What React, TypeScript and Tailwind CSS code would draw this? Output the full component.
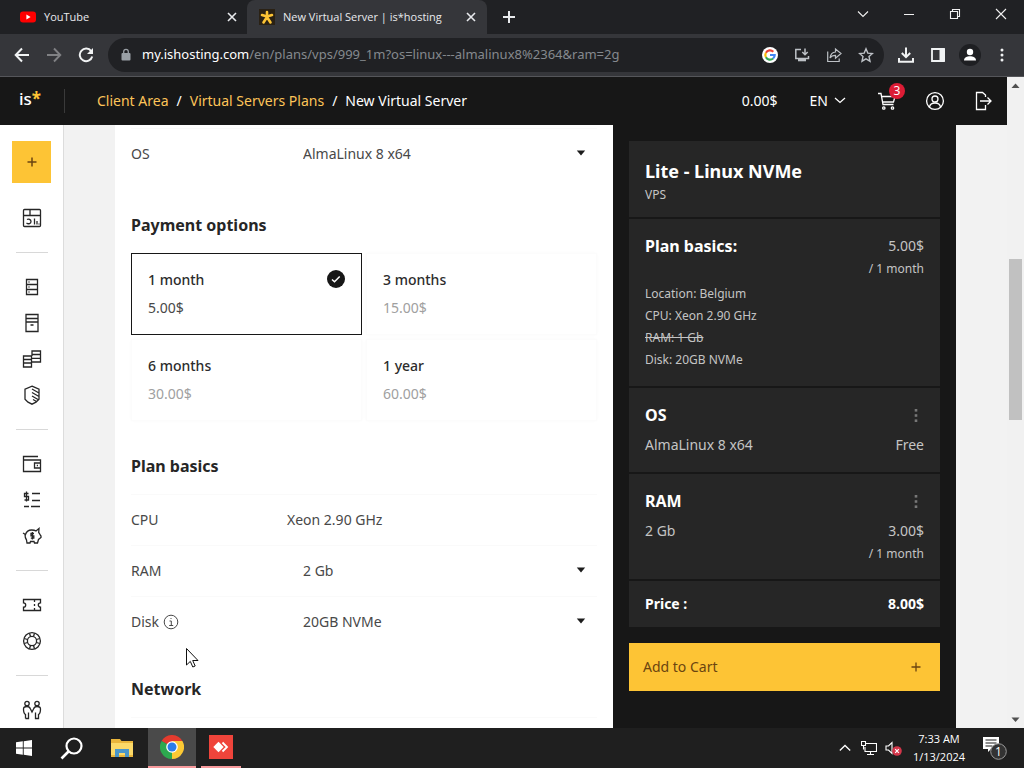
import { useState, type ReactNode } from "react";

type IconProps = { children: ReactNode; className?: string; box?: string };

function Icon({ children, className = "size-5", box = "0 0 20 20" }: IconProps) {
  return (
    <svg viewBox={box} className={className} fill="none" stroke="currentColor" strokeWidth="1.3" aria-hidden="true">
      {children}
    </svg>
  );
}

const CloseIcon = () => (
  <Icon className="size-2.5" box="0 0 10 10">
    <path d="M1 1l8 8M9 1L1 9" strokeWidth="1.6" />
  </Icon>
);

const StarMan = () => (
  <svg viewBox="0 0 16 16" className="size-4" aria-hidden="true">
    <rect width="16" height="16" fill="#2a2114" />
    <g stroke="#fdc435" strokeWidth="2.6" strokeLinecap="round">
      <path d="M8 8.5V3M8 7.500L3 6M8 7.500l5-1.500M8 8l-3.500 5.500M8 8l3.500 5.500" />
    </g>
  </svg>
);

function TabStrip() {
  return (
    <div className="flex h-[34px] shrink-0 bg-[#202124] text-[11px] text-[#e8eaed]">
      <div className="flex w-[247px] items-center pr-1.5 pl-5">
        <svg viewBox="0 0 16 16" className="size-4" aria-hidden="true">
          <rect y="2.500" width="16" height="11" rx="3" fill="#f00" />
          <path d="M6.400 5.600v4.800L10.600 8z" fill="#fff" />
        </svg>
        <span className="ml-2 grow">YouTube</span>
        <button aria-label="Close YouTube" className="p-1"><CloseIcon /></button>
      </div>
      <div className="flex w-[240px] items-center rounded-t-lg bg-[#35363a] pr-[7px] pl-3">
        <StarMan />
        <span className="ml-2 grow whitespace-nowrap">New Virtual Server | is*hosting</span>
        <button aria-label="Close New Virtual Server" className="p-1"><CloseIcon /></button>
      </div>
      <button aria-label="New tab" className="ml-3.5 self-center">
        <Icon className="size-4" box="0 0 16 16"><path d="M8 2v12M2 8h12" strokeWidth="2" /></Icon>
      </button>
      <div className="ml-auto flex h-7 text-[#f1f1f1]">
        <button aria-label="Search tabs" className="flex w-[46px] items-center justify-center">
          <Icon className="size-3" box="0 0 12 12"><path d="M1 3.500l5 5 5-5" strokeWidth="1.100" /></Icon>
        </button>
        <button aria-label="Minimize" className="flex w-[46px] items-center justify-center">
          <Icon className="size-3" box="0 0 12 12"><path d="M1 6.500h10" strokeWidth="1" /></Icon>
        </button>
        <button aria-label="Restore" className="flex w-[46px] items-center justify-center">
          <Icon className="size-3" box="0 0 12 12"><path d="M1.500 3.500h7v7h-7zM3.500 3.500v-2h7v7h-2" strokeWidth="1.100" /></Icon>
        </button>
        <button aria-label="Close window" className="flex w-[46px] items-center justify-center">
          <Icon className="size-3" box="0 0 12 12"><path d="M1 1l10 10M11 1L1 11" strokeWidth="1.100" /></Icon>
        </button>
      </div>
    </div>
  );
}

const toolButton = "flex size-8 items-center justify-center";

function Toolbar() {
  return (
    <div className="flex h-[43px] shrink-0 items-center border-b border-[#55565a] bg-[#35363a] px-1.5 text-[#f1f3f4]">
      <button aria-label="Back" className={toolButton}>
        <Icon className="size-4" box="0 0 16 16"><path d="M15 8H2M8 1.500L1.700 8 8 14.500" strokeWidth="2" /></Icon>
      </button>
      <button aria-label="Forward" className={`${toolButton} text-[#808184]`}>
        <Icon className="size-4" box="0 0 16 16"><path d="M1 8h13M8 1.500L14.300 8 8 14.500" strokeWidth="1.900" /></Icon>
      </button>
      <button aria-label="Reload" className={toolButton}>
        <Icon className="size-4" box="0 0 16 16">
          <path d="M13.200 4.200A6.300 6.300 0 1 0 14.200 9.500" strokeWidth="2" />
          <path d="M15 1v6H9z" fill="currentColor" stroke="none" />
        </Icon>
      </button>
      <div className="mx-1.5 flex h-[34px] grow items-center rounded-full bg-[#202124] pr-0.5 pl-3 text-[#bdc1c6]">
        <svg viewBox="0 0 12 14" className="h-3.5 w-3" fill="#9aa0a6" aria-hidden="true">
          <rect x="1.500" y="5" width="9" height="7.500" rx="1" />
          <path d="M3.700 5.500V3.600a2.300 2.300 0 0 1 4.600 0v1.900" fill="none" stroke="#9aa0a6" strokeWidth="1.300" />
        </svg>
        <div className="ml-2.5 grow font-['Noto_Sans',sans-serif] text-[13px] whitespace-nowrap text-[#85898e]">
          <span className="text-white">my.ishosting.com</span>/en/plans/vps/999_1m?os=linux---almalinux8%2364&amp;ram=2g
        </div>
        <button aria-label="Google" className={toolButton}>
          <svg viewBox="0 0 16 16" className="size-4" aria-hidden="true">
            <circle cx="8" cy="8" r="8" fill="#fff" />
            <g fill="none" strokeWidth="2.200">
              <path d="M11.300 4.700A4.700 4.700 0 0 0 3.900 5.700" stroke="#ea4335" />
              <path d="M3.900 5.700a4.700 4.700 0 0 0 0 4.600" stroke="#fbbc05" />
              <path d="M3.900 10.300a4.700 4.700 0 0 0 7.200 1.200" stroke="#34a853" />
              <path d="M11.100 11.500A4.700 4.700 0 0 0 12.700 8H8" stroke="#4285f4" />
            </g>
          </svg>
        </button>
        <button aria-label="Install app" className={toolButton}>
          <Icon className="size-4" box="0 0 16 16">
            <path d="M7 2.500H1.800v9H14.500V9M11 1.500v6M8.300 5l2.700 2.700L13.700 5" strokeWidth="1.500" />
            <path d="M4 12h8v2.300H4z" fill="currentColor" stroke="none" />
          </Icon>
        </button>
        <button aria-label="Share" className={toolButton}>
          <Icon className="size-4" box="0 0 16 16">
            <path d="M1.700 4.500v10h11.500v-3M9.500 2v3C6 5.300 4.500 7.500 4 11c1.300-2 3-2.600 5.500-2.600v2.800L15 6.500z" strokeWidth="1.200" />
          </Icon>
        </button>
        <button aria-label="Bookmark" className={toolButton}>
          <Icon className="size-4" box="0 0 16 16">
            <path d="M8 1.800l1.800 4.300 4.700.4-3.500 3.100 1 4.600L8 11.800l-4 2.400 1-4.600L1.500 6.500l4.700-.4z" strokeWidth="1.400" />
          </Icon>
        </button>
      </div>
      <button aria-label="Downloads" className={toolButton}>
        <Icon className="size-[18px]" box="0 0 18 18"><path d="M9 1.500v9.500M4.800 7L9 11.200 13.200 7M2 12v3.700h14V12" strokeWidth="2" /></Icon>
      </button>
      <button aria-label="Side panel" className={toolButton}>
        <Icon className="size-4" box="0 0 16 16">
          <path d="M2 2h12v12H2z" strokeWidth="1.800" /><path d="M9.500 2H15v12H9.500z" fill="currentColor" stroke="none" />
        </Icon>
      </button>
      <button aria-label="Profile" className={toolButton}>
        <svg viewBox="0 0 22 22" className="size-[22px]" aria-hidden="true">
          <circle cx="11" cy="11" r="11" fill="#1e1f22" />
          <circle cx="11" cy="8" r="3.200" fill="#fff" />
          <path d="M5 16.500c0-3 3-4.300 6-4.300s6 1.300 6 4.300z" fill="#fff" />
        </svg>
      </button>
      <button aria-label="Menu" className={toolButton}>
        <svg viewBox="0 0 4 16" className="h-4 w-1" fill="currentColor" aria-hidden="true">
          <circle cx="2" cy="3" r="1.500" /><circle cx="2" cy="8" r="1.500" /><circle cx="2" cy="13" r="1.500" />
        </svg>
      </button>
    </div>
  );
}

function SiteHeader() {
  return (
    <header className="flex h-12 shrink-0 items-center bg-[#171717] pr-3 text-[14px] text-white">
      <a href="#home" className="w-16 pb-1 pl-[19px] text-[17px] leading-6 font-medium">
        is<span className="font-bold text-[#fdc435]">*</span>
      </a>
      <div className="h-6 w-px bg-[#3a3a3a]" />
      <nav aria-label="Breadcrumb" className="ml-8 flex gap-2 pb-0.5 whitespace-nowrap">
        <a href="#client" className="text-[#fdc459]">Client Area</a>
        <span>/</span>
        <a href="#plans" className="text-[#fdc459]">Virtual Servers Plans</a>
        <span>/</span>
        <span>New Virtual Server</span>
      </nav>
      <span className="ml-auto pb-0.5">0.00$</span>
      <button className="ml-8 flex items-center gap-1.5 pb-0.5">
        EN
        <Icon className="size-3" box="0 0 12 12"><path d="M1 4l5 4.500L11 4" /></Icon>
      </button>
      <a href="#cart" aria-label="Cart, 3 items" className="relative ml-[29px] flex size-6 items-center justify-center">
        <Icon>
          <path d="M1 2.500h3l2 11h10.500M5 5.500h13l-1.500 5.500H6" />
          <circle cx="6.800" cy="17" r="1.200" /><circle cx="15.500" cy="17" r="1.200" />
        </Icon>
        <span className="absolute -top-1.5 left-3.5 flex size-4 items-center justify-center rounded-full bg-[#dc1c35] text-[12px]">3</span>
      </a>
      <a href="#account" aria-label="Account" className="ml-6 flex size-6 items-center justify-center">
        <Icon>
          <circle cx="10" cy="10" r="8.400" /><circle cx="10" cy="8" r="3" />
          <path d="M4.500 16c.5-3 2.500-4 5.500-4s5 1 5.500 4" />
        </Icon>
      </a>
      <a href="#logout" aria-label="Log out" className="ml-6 flex size-6 items-center justify-center">
        <Icon><path d="M12.500 6V4L9.500 1.500h-6v17h9V14M7 10h11M14.500 6.500L18 10l-3.500 3.500" /></Icon>
      </a>
    </header>
  );
}

const navGroups: { label: string; art: ReactNode }[][] = [
  [
    { label: "Dashboard", art: <><rect x="1.500" y="1.500" width="17" height="17" rx="1" /><path d="M1.500 7.500h17M8 1.500v6M5 11.500c1.500-1 4 0 4 2s-2.500 3-4.500 1.500M12.500 16.500v-6M15 16.500V13M17 16.500v-1" /></> },
  ],
  [
    { label: "Virtual servers", art: <path d="M4.500 2.500h11v15h-11zM4.500 7.500h11M4.500 12.500h11M6.500 5h1M6.500 10h1M6.500 15h1" /> },
    { label: "Dedicated servers", art: <path d="M4 1.500h12v17H4zM4 5.500h12M4 9h12M8.500 12h3" /> },
    { label: "Storage", art: <path d="M1.500 7h8v11h-8zM1.500 10.500h8M1.500 14h8M10 13h8.500V2H10v5M10 5.500h8.500M10 9.300h8.500" /> },
    { label: "Protection", art: <path d="M10 1.200l7 3v10l-3 3-4 2-4-2-3-3v-10zM10 4l7 4M10 7.500l7 4M10 11l6 3.500M11 14.500l3.500 2" /> },
  ],
  [
    { label: "Wallet", art: <path d="M16 2.500H1.500v15h17V6h-17M18.500 9h-6v5h6M14.800 11.500h1.200" /> },
    { label: "Invoices", art: <path d="M6.500 3.500h-4v3h4v3.500h-4M4.500 1.500v10M10 3.500h8M10 10.500h8M2 16.500h5M9 16.500h9" /> },
    { label: "Savings", art: <><path d="M1 7l2.500 1.500C4.500 5.500 6.500 4 9.500 4c2 0 3.500.3 4.500 1l3-2.500-.3 4C18 8 18 9 19 10v1.500l-2.500 2L15.500 17h-3l-.5-1.500H8.500L8 17H5l-.5-3C3.300 12.500 3 10.500 3 8.500" /><path d="M12 7.500H9v2.300h2.800v2.400H8.800M10.400 6v7.500" /></> },
  ],
  [
    { label: "Tickets", art: <path d="M1.500 4.500h17v3.300a2.200 2.200 0 0 0 0 4.400v3.300h-17v-3.300a2.200 2.200 0 0 0 0-4.400zM12.500 5v2M12.500 9v2M12.500 13v2" /> },
    { label: "Support", art: <><circle cx="10" cy="10" r="8.400" /><circle cx="10" cy="10" r="4.600" /><path d="M7.500 2.200L8.500 5.500M12.500 2.200l-1 3.300M7.500 17.800l1-3.300M12.500 17.800l-1-3.300M2.200 7.500l3.300 1M2.200 12.500l3.300-1M17.800 7.500l-3.300 1M17.800 12.500l-3.300-1" /></> },
  ],
  [
    { label: "Partners", art: <><circle cx="5" cy="3.500" r="2.200" /><circle cx="15" cy="3.500" r="2.200" /><path d="M3.500 18.500v-4c-2-1-2-3-2-5.500 0-1.500 1.500-2.500 3.500-2.500S8 7.500 8.500 9l1.500 3 1.500-3c.5-1.500 1.500-2.500 3.500-2.500S18.500 7.500 18.500 9c0 2.500 0 4.500-2 5.500v4h-3v-6M3.500 18.500h3v-6" /></> },
  ],
];

function SideNav() {
  return (
    <nav aria-label="Main" className="flex w-16 shrink-0 flex-col items-center border-r border-[#dcdcdc] bg-white pt-4 text-[#262626]">
      <button aria-label="Create" className="mb-[17px] flex h-[42px] w-[39px] shrink-0 items-center justify-center bg-[#fdc435] text-[#6b4410]">
        <Icon className="size-3" box="0 0 12 12"><path d="M6 1.500v9M1.500 6h9" strokeWidth="1.500" /></Icon>
      </button>
      {navGroups.map((group, i) => (
        <div key={i} className="flex flex-col items-center">
          {i > 0 && <div className="my-4 h-px w-8 bg-[#d8d8d8]" />}
          {group.map((item) => (
            <a key={item.label} href="#nav" aria-label={item.label} className="flex size-9 items-center justify-center">
              <Icon>{item.art}</Icon>
            </a>
          ))}
        </div>
      ))}
    </nav>
  );
}

const rowStyle = "flex h-[51px] items-center border-t border-[#fafafa] pb-0.5";

function SelectRow({ id, label, options, info = false }: { id: string; label: string; options: string[]; info?: boolean }) {
  return (
    <div className={rowStyle}>
      <label htmlFor={id} className="flex w-[156px] shrink-0 items-center gap-1">
        {label}
        {info && (
          <Icon className="mt-0.5 size-4" box="0 0 16 16">
            <circle cx="8" cy="8" r="6.800" strokeWidth="1" />
            <path d="M6.500 7h1.800v4.500M6.200 11.500h4M7.500 4.500h1" strokeWidth="1" />
          </Icon>
        )}
      </label>
      <div className="relative flex grow items-center">
        <select id={id} className="w-full appearance-none bg-transparent pl-4 outline-none">
          {options.map((o) => <option key={o}>{o}</option>)}
        </select>
        <svg viewBox="0 0 10 6" className="pointer-events-none absolute right-[11px] h-1.5 w-2.5" fill="#1c1c1c" aria-hidden="true">
          <path d="M.8.5h8.400L5 5.500z" />
        </svg>
      </div>
    </div>
  );
}

const headingStyle = "text-[16px] leading-7 font-bold text-[#262626]";

const periods = [
  { name: "1 month", price: "5.00$" },
  { name: "3 months", price: "15.00$" },
  { name: "6 months", price: "30.00$" },
  { name: "1 year", price: "60.00$" },
];

function PlanForm() {
  const [selected, setSelected] = useState(0);
  return (
    <main className="grow bg-white px-4 pt-[3px] text-[14px] text-[#484848]">
      <SelectRow id="os" label="OS" options={["AlmaLinux 8 x64"]} />
      <h2 className={`mt-8 mb-3.5 ${headingStyle}`}>Payment options</h2>
      <div className="grid grid-cols-2 gap-1">
        {periods.map((p, i) => (
          <button
            key={p.name}
            aria-pressed={i === selected}
            onClick={() => setSelected(i)}
            className={`flex justify-between border px-4 py-3 text-left leading-7 ${i === selected ? "border-[#171717]" : "border-[#fcfcfc] shadow-[0_0_3px_#00000006]"}`}
          >
            <span>
              <span className="block font-medium text-[#2c2c2c]">{p.name}</span>
              <span className={i === selected ? "block" : "block text-[#a0a0a0]"}>{p.price}</span>
            </span>
            {i === selected && (
              <svg viewBox="0 0 18 18" className="mt-1 size-[18px]" aria-hidden="true">
                <circle cx="9" cy="9" r="9" fill="#171717" />
                <path d="M5 9.500l2.500 2.300L12.700 6.500" fill="none" stroke="#fff" strokeWidth="1.500" />
              </svg>
            )}
          </button>
        ))}
      </div>
      <h2 className={`mt-[31px] mb-3.5 ${headingStyle}`}>Plan basics</h2>
      <div className={rowStyle}>
        <span className="w-[156px] shrink-0">CPU</span>
        <span>Xeon 2.90 GHz</span>
      </div>
      <SelectRow id="ram" label="RAM" options={["2 Gb"]} />
      <SelectRow id="disk" label="Disk" options={["20GB NVMe"]} info />
      <h2 className={`mt-7 mb-3.5 ${headingStyle}`}>Network</h2>
      <div className="border-t border-[#fafafa]" />
    </main>
  );
}

const DotsButton = ({ label }: { label: string }) => (
  <button aria-label={label} className="flex w-4 items-center justify-center text-[#777777]">
    <svg viewBox="0 0 4 16" className="h-4 w-1" fill="currentColor" aria-hidden="true">
      <rect x=".7" y="2" width="2.600" height="2.600" /><rect x=".7" y="7.200" width="2.600" height="2.600" /><rect x=".7" y="12.400" width="2.600" height="2.600" />
    </svg>
  </button>
);

function Summary() {
  return (
    <aside className="w-[343px] shrink-0 bg-[#171717] px-4 pt-4 text-[14px] leading-7 text-[#c4c4c4]">
      <div className="flex flex-col gap-0.5">
        <section className="bg-[#262626] px-4 pt-4 pb-3">
          <h2 className="text-[18px] leading-7 font-bold text-white">Lite - Linux NVMe</h2>
          <p className="text-[12px] leading-5">VPS</p>
        </section>
        <section className="bg-[#262626] px-4 pt-[13px] pb-[15px]">
          <div className="flex justify-between">
            <h3 className="text-[16px] font-bold text-white">Plan basics:</h3>
            <span>5.00$</span>
          </div>
          <p className="text-right text-[12px] leading-[18px]">/ 1 month</p>
          <ul className="mt-[5px] text-[12px] leading-[22px]">
            <li>Location: Belgium</li>
            <li>CPU: Xeon 2.90 GHz</li>
            <li className="line-through">RAM: 1 Gb</li>
            <li>Disk: 20GB NVMe</li>
          </ul>
        </section>
        <section className="bg-[#262626] px-4 py-[13px]">
          <div className="flex justify-between">
            <h3 className="text-[16px] font-bold text-white">OS</h3>
            <DotsButton label="OS options" />
          </div>
          <div className="mt-0.5 flex justify-between"><span>AlmaLinux 8 x64</span><span>Free</span></div>
        </section>
        <section className="bg-[#262626] px-4 pt-[13px] pb-4">
          <div className="flex justify-between">
            <h3 className="text-[16px] font-bold text-white">RAM</h3>
            <DotsButton label="RAM options" />
          </div>
          <div className="mt-0.5 flex justify-between"><span>2 Gb</span><span>3.00$</span></div>
          <p className="text-right text-[12px] leading-[18px]">/ 1 month</p>
        </section>
        <section className="flex justify-between bg-[#262626] px-4 py-[9px] font-bold text-white">
          <span>Price :</span><span>8.00$</span>
        </section>
      </div>
      <button className="mt-4 flex h-12 w-full items-center justify-between bg-[#fdc435] pr-[18px] pl-3.5 text-[#6b4410]">
        Add to Cart
        <Icon className="size-3" box="0 0 12 12"><path d="M6 1.500v9M1.500 6h9" strokeWidth="1.300" /></Icon>
      </button>
    </aside>
  );
}

function Scrollbar() {
  return (
    <div className="flex w-[17px] shrink-0 flex-col items-center bg-[#f1f1f1]">
      <svg viewBox="0 0 17 17" className="size-[17px] shrink-0" fill="#505050" aria-hidden="true"><path d="M4.500 11h8l-4-4.500z" /></svg>
      <div className="grow-[165] basis-0" />
      <div className="w-[13px] grow-[161] basis-0 bg-[#c1c1c1]" />
      <div className="grow-[291] basis-0" />
      <svg viewBox="0 0 17 17" className="size-[17px] shrink-0" fill="#505050" aria-hidden="true"><path d="M4.500 6.500h8l-4 4.500z" /></svg>
    </div>
  );
}

function Taskbar() {
  return (
    <footer className="flex h-10 shrink-0 items-stretch bg-[#1f1f1f] text-white">
      <button aria-label="Start" className="flex w-12 items-center justify-center">
        <svg viewBox="0 0 16 16" className="size-4" fill="#fff" aria-hidden="true">
          <path d="M0 2.200l6.800-.9v6.200H0zM7.700 1.200L16 0v7.500H7.700zM0 8.400h6.800v6.300L0 13.800zM7.700 8.400H16V16l-8.300-1.200z" />
        </svg>
      </button>
      <button aria-label="Search" className="flex w-12 items-center justify-center">
        <Icon className="size-6" box="0 0 24 24"><circle cx="14" cy="10" r="7.500" strokeWidth="2.200" /><path d="M8.500 15.500L1.500 22.500" strokeWidth="2.600" /></Icon>
      </button>
      <button aria-label="File Explorer" className="flex w-[52px] items-center justify-center">
        <svg viewBox="0 0 22 20" className="h-5 w-[22px]" aria-hidden="true">
          <path d="M0 1h9l1.500 2H22v16H0z" fill="#e9b53b" /><path d="M0 5h22v12H0z" fill="#fbd968" />
          <path d="M4 19v-8h14v8h-4v-4H8v4z" fill="#4a96c9" />
        </svg>
      </button>
      <button aria-label="Chrome" className="flex w-12 items-center justify-center border-b-2 border-[#f79a9c] bg-[#4a4a4a]">
        <svg viewBox="0 0 24 24" className="size-6" aria-hidden="true">
          <path d="M12 12L1.600 6A12 12 0 0 1 22.400 6z" fill="#e33b2e" />
          <path d="M12 12L22.400 6A12 12 0 0 1 12 24z" fill="#fcc934" />
          <path d="M12 12v12A12 12 0 0 1 1.600 6z" fill="#2da94f" />
          <path d="M12 6h10.400l-5 9.500L12 24l4-9z" fill="#fcc934" />
          <circle cx="12" cy="12" r="5.800" fill="#fff" /><circle cx="12" cy="12" r="4.500" fill="#2b7de9" />
        </svg>
      </button>
      <button aria-label="AnyDesk" className="ml-[5px] flex w-10 items-center justify-center border-b-2 border-[#f79a9c]">
        <svg viewBox="0 0 24 24" className="size-6" aria-hidden="true">
          <rect width="24" height="24" fill="#ef443b" />
          <path d="M9.500 6.800l5.200 5.200-5.200 5.200L4.300 12z" fill="#fff" />
          <path d="M13.500 7.500L18 12l-4.500 4.500" fill="none" stroke="#fff" strokeWidth="1.800" />
        </svg>
      </button>
      <div className="ml-auto flex items-center pr-4">
        <button aria-label="Hidden icons" className="w-6">
          <Icon className="mx-auto size-3" box="0 0 12 12"><path d="M.8 8.500L6 3.500l5.200 5" /></Icon>
        </button>
        <Icon className="mx-1 size-4" box="0 0 16 16"><path d="M5 3.500h10.500v8H4V7M.5 1.500h4v4h-4zM9.500 11.500v3M6 14.500h7M2.500 5.500v4" strokeWidth="1.100" /></Icon>
        <svg viewBox="0 0 18 16" className="ml-1 h-4 w-[18px]" aria-hidden="true">
          <path d="M1 6h2.500L7 2.500v11L3.500 10H1z" fill="none" stroke="#fff" strokeWidth="1.100" />
          <circle cx="12" cy="11" r="4.800" fill="#d4364a" />
          <path d="M10.200 9.200l3.600 3.600M13.800 9.200l-3.600 3.600" stroke="#fff" strokeWidth="1.200" />
        </svg>
        <div className="w-[72px] text-center text-[11px] leading-[18px] whitespace-nowrap">
          <div>7:33 AM</div>
          <div>1/13/2024</div>
        </div>
        <button aria-label="1 notification" className="ml-[7px]">
          <svg viewBox="0 0 26 26" className="size-[26px]" aria-hidden="true">
            <path d="M1 2h16v12H9l-3 3v-3H1z" fill="#fff" />
            <path d="M3.500 5h11M3.500 8h11M3.500 11h7" stroke="#1f1f1f" strokeWidth="1.200" />
            <circle cx="16.500" cy="16.500" r="7.800" fill="#333" stroke="#999" />
            <text x="16.500" y="21" textAnchor="middle" fontSize="12" fill="#fff">1</text>
          </svg>
        </button>
      </div>
    </footer>
  );
}

export default function App() {
  return (
    <div className="relative flex h-screen flex-col overflow-hidden bg-[#f2f2f2] font-['Open_Sans','Noto_Sans',sans-serif]">
      <TabStrip />
      <Toolbar />
      <div className="flex min-h-0 grow font-['Noto_Sans',sans-serif]">
        <div className="flex min-w-0 grow flex-col">
          <SiteHeader />
          <div className="flex min-h-0 grow overflow-hidden">
            <SideNav />
            <div className="flex grow px-[51px]">
              <PlanForm />
              <Summary />
            </div>
          </div>
        </div>
        <Scrollbar />
      </div>
      <Taskbar />
      <svg viewBox="0 0 13 20" className="pointer-events-none absolute top-[648px] left-[186px] h-5 w-[13px]" aria-hidden="true">
        <path d="M.5.500v16.500l3.800-3.600 2.500 5.600 2.400-1-2.500-5.500H12z" fill="#fff" stroke="#111" strokeWidth="1" />
      </svg>
    </div>
  );
}
